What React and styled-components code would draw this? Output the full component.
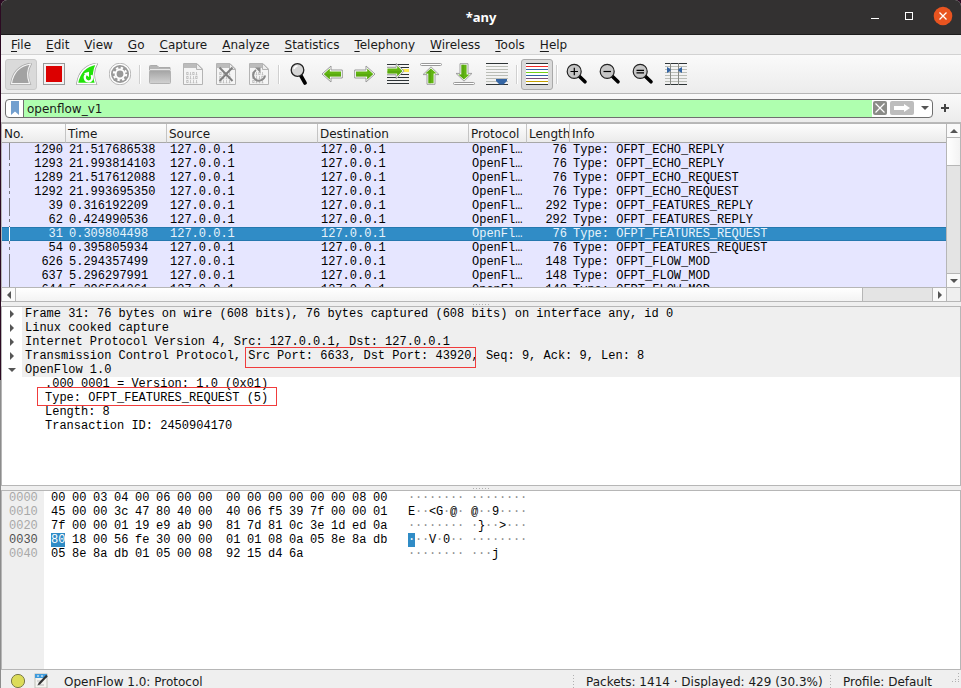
import styled, { createGlobalStyle, css } from "styled-components";

const GlobalStyle = createGlobalStyle`
  * {
    box-sizing: border-box;
  }

  body {
    margin: 0;
    overflow: hidden;
    color: #1a1a1a;
    font-family: "DejaVu Sans", sans-serif;
    font-size: 12px;
  }

  button {
    padding: 0;
    border: 0;
    background: none;
    color: inherit;
    font: inherit;
  }
`;

const mono = css`
  font-family: "Liberation Mono", monospace;
  font-size: 12px;
  line-height: 14px;
  color: #000;
`;

const Desktop = styled.div`
  height: 100vh;
  padding-left: 1px;
  background: linear-gradient(#2c0a22 0 380px, #8c8c8c 380px);
`;

const Window = styled.div`
  display: flex;
  flex-direction: column;
  height: 100%;
  overflow: hidden;
  border-radius: 6px 6px 0 0;
  background: #efefef;
`;

const TitleBar = styled.header`
  display: grid;
  grid-template-columns: 1fr auto 1fr;
  align-items: center;
  height: 35px;
  flex: none;
  border-bottom: 1px solid #1c1b1b;
  background: #333131;
`;

const Title = styled.h1`
  grid-column: 2;
  margin: 0;
  color: #fff;
  font: bold 13px/18px "Noto Sans", sans-serif;
`;

const WindowButtons = styled.div`
  display: flex;
  justify-content: flex-end;
  gap: 14px;
  padding-right: 8px;
  margin-bottom: 2px;
`;

const WindowButton = styled.button`
  width: 20px;
  height: 20px;

  svg {
    display: block;
  }
`;

const MenuBar = styled.nav`
  display: flex;
  gap: 15px;
  height: 20px;
  flex: none;
  padding-left: 10px;
  border-bottom: 1px solid #d2d2d2;
`;

const MenuItem = styled.button`
  padding-top: 2px;
  line-height: 17px;

  &::first-letter {
    text-decoration: underline;
    text-underline-offset: 2px;
  }
`;

const ToolBar = styled.div`
  display: flex;
  align-items: center;
  gap: 1px;
  height: 39px;
  flex: none;
  padding: 1px 0 0 4px;
  border-bottom: 1px solid #b6b6b6;
  background: linear-gradient(#fafafa, #ececec);
`;

const ToolButton = styled.button`
  display: flex;
  align-items: flex-start;
  justify-content: center;
  width: 32px;
  height: 31px;
  padding-top: 3px;
  border: 1px solid ${({ $border }) => $border || "transparent"};
  border-radius: 3px;
  background: ${({ $border }) => ($border ? "#dadada" : "none")};
`;

const Separator = styled.span`
  width: 6px;
  height: 19px;
  background: linear-gradient(90deg, transparent 2px, #d0d0d0 2px 3px, #fff 3px 4px, transparent 4px);
`;

const FilterBar = styled.form`
  display: flex;
  align-items: center;
  height: 29px;
  flex: none;
  padding: 0 12px 0 4px;
  border-bottom: 1px solid #b9b9b9;
  background: linear-gradient(#fafafa, #ececec);
`;

const FilterField = styled.div`
  display: flex;
  align-items: center;
  flex: 1;
  height: 19px;
  overflow: hidden;
  border: 1px solid #6f6f6f;
  border-radius: 4px;
  background: #fff;

  svg {
    display: block;
  }
`;

const BookmarkButton = styled.button`
  display: flex;
  align-items: center;
  justify-content: center;
  width: 18px;
  height: 17px;
  border-right: 1px solid #6f6f6f;
`;

const FilterInput = styled.input`
  flex: 1;
  min-width: 0;
  height: 17px;
  margin-right: 1px;
  padding: 2px 3px 0;
  border: 0;
  outline: 0;
  background: #afffaf;
  color: #1a1a1a;
  font: inherit;
`;

const ClearButton = styled.button`
  width: 14px;
  height: 14px;
  border-radius: 2px;
  background: #8b8c88;
`;

const ApplyButton = styled.button`
  width: 24px;
  height: 14px;
  margin-left: 3px;
  border-radius: 2px;
  background: #bdbdbd;
`;

const HistoryButton = styled.button`
  display: flex;
  align-items: center;
  justify-content: center;
  width: 18px;
  height: 17px;
  padding-left: 4px;
`;

const AddButton = styled.button`
  width: 8px;
  height: 8px;
  margin-left: 8px;

  svg {
    display: block;
  }
`;

const Pane = styled.section`
  flex: ${({ $grow }) => $grow || 180} 1 0;
  min-height: 0;
  overflow: hidden;
  border: 1px solid #b6b6b6;
  background: #fff;
`;

const Splitter = styled.div`
  display: flex;
  align-items: center;
  justify-content: center;
  height: 4px;
  flex: none;

  &::after {
    content: "";
    width: 17px;
    height: 1px;
    background: repeating-linear-gradient(90deg, #b0b0b0 0 1px, transparent 1px 3px);
  }
`;

const PacketPane = styled(Pane)`
  display: grid;
  grid-template-columns: minmax(0, 1fr) 14px;
  grid-template-rows: minmax(0, 1fr) 14px;
`;

const PacketView = styled.div`
  overflow: hidden;
  background: #e6e6ff;
`;

const PacketTable = styled.table`
  width: 100%;
  table-layout: fixed;
  border-collapse: separate;
  border-spacing: 0;
`;

const HeadCell = styled.th`
  height: 19px;
  overflow: hidden;
  padding: 2px 2px 0;
  border-right: 1px solid #c4c4c4;
  border-bottom: 1px solid #a8a8a8;
  background: linear-gradient(#fdfdfd, #ebebeb);
  font-weight: normal;
  line-height: 16px;
  text-align: left;
  white-space: nowrap;

  &:last-child {
    border-right: 0;
  }
`;

const Cell = styled.td`
  ${mono}
  height: 14px;
  overflow: hidden;
  padding: 0 3px;
  text-align: ${({ $right }) => ($right ? "right" : "left")};
  text-overflow: ellipsis;
  white-space: nowrap;
`;

const solidLine = "linear-gradient(currentColor, currentColor)";
const dashedLine =
  "linear-gradient(currentColor 3px, transparent 3px 6px, currentColor 6px 9px, transparent 9px 13px, currentColor 13px)";

const PacketRow = styled.tr`
  color: ${({ $selected }) => ($selected ? "#fff" : "#77777f")};
  background: ${({ $selected }) =>
    $selected ? "linear-gradient(#2478af 1px, #308cc6 1px 13px, #2478af 13px)" : "#e6e6ff"};

  ${Cell} {
    color: ${({ $selected }) => ($selected ? "#e8f3fb" : "#000")};
  }

  ${Cell}:first-child {
    background: ${({ $related }) => ($related ? dashedLine : solidLine)} 7px 0 / 1px 14px no-repeat;
    color: inherit;
  }
`;

const PacketNumber = styled.span`
  color: ${({ $selected }) => ($selected ? "#e8f3fb" : "#000")};
`;

const VScroll = styled.div`
  display: flex;
  flex-direction: column;
  border-left: 1px solid #b6b6b6;
  background: #e4e4e4;
`;

const HScroll = styled.div`
  display: flex;
  border-top: 1px solid #b6b6b6;
  background: #e4e4e4;
`;

const ScrollButton = styled.button`
  display: flex;
  align-items: center;
  justify-content: center;
  width: 13px;
  height: 13px;
  flex: none;
  background: #fafafa;
`;

const VThumb = styled.div`
  height: 29px;
  margin-bottom: auto;
  border: solid #b6b6b6;
  border-width: 1px 0;
  background: linear-gradient(90deg, #fff, #f3f3f3);

  & + ${ScrollButton} {
    height: 14px;
    border-top: 1px solid #b6b6b6;
  }
`;

const HThumb = styled.div`
  flex: 0 1 848px;
  border: solid #b6b6b6;
  border-width: 0 1px;
  background: linear-gradient(#fff, #f3f3f3);

  & + ${ScrollButton} {
    width: 14px;
    margin-left: auto;
    border-left: 1px solid #b6b6b6;
  }
`;

const ScrollCorner = styled.div`
  border: solid #b6b6b6;
  border-width: 1px 0 0 1px;
  background: #efefef;
`;

const DetailPane = styled(Pane)`
  position: relative;
`;

const Tree = styled.ul`
  ${mono}
  margin: 0;
  padding: 0;
  list-style: none;
  white-space: pre;
`;

const TreeLine = styled.div`
  display: flex;
`;

const Expander = styled.button`
  display: flex;
  align-items: center;
  justify-content: center;
  width: 20px;
  height: 14px;
  flex: none;
`;

const TreeText = styled.span`
  flex: 1;
  padding-left: 3px;
  background: #efefef;
`;

const TreeLeaf = styled.li`
  padding-left: 43px;
`;

const Mark = styled.div`
  position: absolute;
  left: ${({ $left }) => $left}px;
  top: ${({ $top }) => $top}px;
  width: ${({ $width }) => $width}px;
  height: ${({ $height }) => $height}px;
  border: 1px solid #f03c3c;
  pointer-events: none;
`;

const HexPane = styled(Pane)`
  ${mono}
  background: linear-gradient(90deg, #efefef 42px, #fff 42px);
`;

const HexRow = styled.div`
  display: flex;
  height: 14px;
`;

const Offset = styled.span`
  width: 49px;
  padding-left: 7px;
  color: ${({ $active }) => ($active ? "#505050" : "#a8a8a8")};
`;

const HexGroup = styled.span`
  display: flex;
  width: 168px;
  margin-right: ${({ $last }) => ($last ? "14px" : "7px")};
`;

const HexByte = styled.span`
  width: 14px;
  margin-right: 7px;
  background: ${({ $active }) => ($active ? "#308cc6" : "none")};
  color: ${({ $active }) => ($active ? "#fff" : "#000")};
`;

const AsciiGroup = styled.span`
  display: flex;
  width: 56px;
  margin-right: 7px;
`;

const AsciiChar = styled.span`
  width: 7px;
  background: ${({ $active }) => ($active ? "#308cc6" : "none")};
  color: ${({ $active, $dim }) => ($active ? "#fff" : $dim ? "#909090" : "#000")};
`;

const StatusBar = styled.footer`
  display: flex;
  align-items: flex-start;
  height: 18px;
  flex: none;
  overflow: hidden;
  padding: 3px 0 0 9px;
  line-height: 18px;
  white-space: nowrap;
`;

const StatusIcon = styled.button`
  width: 16px;
  height: 16px;
  margin-right: 7px;

  svg {
    display: block;
  }
`;

const StatusText = styled.span`
  flex: 1;
  padding-left: 8px;
`;

const StatusSection = styled.span`
  width: ${({ $width }) => $width}px;
  padding-left: 13px;
  background: repeating-linear-gradient(#b0b0b0 0 1px, transparent 1px 3px) 0 2px / 1px 14px no-repeat;
`;

const Svg = ({ size = 22, children }) => (
  <svg width={size} height={size} viewBox={`0 0 ${size} ${size}`} aria-hidden="true">
    {children}
  </svg>
);

const finPath = "M1.5 20.5C3 11 9 3 20.5 1C17.5 6 16.5 13 19.5 20.5Z";

const FinIcon = () => (
  <Svg>
    <path d={finPath} fill="#a2a2a2" stroke="#aaa" strokeWidth="2.6" />
    <path d={finPath} fill="#a2a2a2" stroke="#f4f4f4" strokeWidth="1.2" />
  </Svg>
);

const StopIcon = () => (
  <Svg>
    <rect x=".5" y=".5" width="21" height="21" fill="#f2f2f2" stroke="#999" />
    <rect x="3" y="3" width="16" height="16" fill="#dc0000" />
  </Svg>
);

const RestartIcon = () => (
  <Svg>
    <path d={finPath} fill="#21e308" stroke="#999" strokeWidth="2.6" />
    <path d={finPath} fill="#21e308" stroke="#fff" strokeWidth="1.3" />
    <path d="M10 11.5C7.5 14 9 18.5 12.5 18.5C16 18.5 17 15 15.5 12" fill="none" stroke="#fff" strokeWidth="2.2" />
    <path d="M8 10.2L13 8.8V14Z" fill="#fff" />
  </Svg>
);

const GearIcon = () => (
  <Svg>
    <circle cx="11" cy="11" r="10.8" fill="#fff" stroke="#999" strokeWidth=".7" />
    <circle cx="11" cy="11" r="9" fill="#999" />
    <circle cx="11" cy="11" r="4.4" fill="none" stroke="#fff" strokeWidth="2" />
    <circle cx="11" cy="11" r="6.2" fill="none" stroke="#fff" strokeWidth="2" strokeDasharray="2.4 2.47" />
  </Svg>
);

const FolderIcon = () => (
  <Svg>
    <defs>
      <linearGradient id="folder" x2="0" y2="1">
        <stop stopColor="#a4a4a4" />
        <stop offset="1" stopColor="#d2d2d2" />
      </linearGradient>
    </defs>
    <path d="M.5 5V3.5Q.5 2.5 1.5 2.5H8L10 4.5H21V7H.5Z" fill="#b5b5b5" stroke="#aaa" />
    <rect x=".5" y="7.5" width="21" height="13" rx="1" fill="url(#folder)" stroke="#b2b2b2" />
    <rect x="1" y="6" width="20" height="1" fill="#e8e8e8" />
  </Svg>
);

const fileDigits = [
  { y: 9, digits: [0, 1, 0, 1] },
  { y: 13, digits: [0, 1, 1, 0] },
  { y: 17, digits: [0, 1, 1, 1] },
];

const FileIcon = ({ children }) => (
  <Svg>
    <path d="M1.5 .5H15L20.5 6V21.5H1.5Z" fill="#f5f5f5" stroke="#b4b4b4" />
    <path d="M2 1H14.5L16 5H2Z" fill="#bcbcbc" />
    <path d="M14.5 .5V6.5H20.5Z" fill="#eee" stroke="#b4b4b4" />
    {fileDigits.map(({ y, digits }) =>
      digits.map((digit, i) =>
        digit ? (
          <path key={`${y}${i}`} d={`M${5.5 + i * 3} ${y}v3M${4.6 + i * 3} ${y + 2.8}h1.8`} stroke="#bbb" strokeWidth=".8" />
        ) : (
          <rect key={`${y}${i}`} x={4.7 + i * 3} y={y + 0.3} width="1.4" height="2.4" fill="none" stroke="#bbb" strokeWidth=".7" />
        )
      )
    )}
    {children}
  </Svg>
);

const CloseFileIcon = () => (
  <FileIcon>
    <path d="M4.5 4.5L17.5 18M17.5 4.5L4.5 18" stroke="#808080" strokeWidth="2" />
  </FileIcon>
);

const ReloadIcon = () => (
  <FileIcon>
    <path d="M8 7C4.5 9.5 4 14 7.5 16.7C11 19 16.5 17 17 12.5" fill="none" stroke="#8a8a8a" strokeWidth="2" />
    <path d="M7 4.5H12.5V10Z" fill="#8a8a8a" />
  </FileIcon>
);

const FindIcon = () => (
  <Svg>
    <path d="M12.5 12L17 20" stroke="#000" strokeWidth="3.6" strokeLinecap="round" />
    <circle cx="9.5" cy="7" r="6.3" fill="#d6d6d6" stroke="#222" strokeWidth="1.3" />
    <path d="M6 6A4 4 0 0 1 9.5 3" fill="none" stroke="#fff" strokeWidth="1.5" />
  </Svg>
);

const ZoomIcon = ({ d }) => (
  <Svg>
    <path d="M12.5 12.5L19 18.8" stroke="#000" strokeWidth="3.6" strokeLinecap="round" />
    <circle cx="8.2" cy="8.4" r="7" fill="#c6c6c6" stroke="#222" strokeWidth="1.2" />
    <path d={d} stroke="#000" strokeWidth="1.2" />
  </Svg>
);

const greenArrow = "M1 11L10 3V7H21.3V15H10V19Z";

const Arrow = ({ transform }) => (
  <g transform={transform}>
    <path d={greenArrow} fill="#fff" stroke="#999" strokeWidth="1" strokeLinejoin="round" />
    <path d="M2.8 11L8.8 5.4V8.4H20V13.6H8.8V16.6Z" fill="#62b512" />
    <path d="M2.8 11H20V13.6H8.8V16.6Z" fill="#4f9e0b" opacity=".5" />
  </g>
);

const BackIcon = () => (
  <Svg>
    <Arrow />
  </Svg>
);

const ForwardIcon = () => (
  <Svg>
    <Arrow transform="matrix(-1 0 0 1 22 0)" />
  </Svg>
);

const GoToIcon = () => (
  <Svg>
    <path d="M0 1.5H22M0 4.5H22M0 14.5H22M0 17.5H22M0 20.5H22M0 11.5H22" stroke="#2e3436" />
    <rect x="14" y="6" width="8" height="3" fill="#fce94f" />
    <Arrow transform="matrix(-.88 0 0 .95 18 -2.4)" />
  </Svg>
);

const FirstIcon = () => (
  <Svg>
    <rect x=".5" y=".5" width="21" height="2" rx="1" fill="#fff" stroke="#999" />
    <Arrow transform="matrix(0 .86 -1 0 22 3)" />
  </Svg>
);

const LastIcon = () => (
  <Svg>
    <Arrow transform="matrix(0 -.86 -1 0 22 19)" />
    <rect x=".5" y="19.5" width="21" height="2" rx="1" fill="#fff" stroke="#999" />
  </Svg>
);

const AutoScrollIcon = () => (
  <Svg>
    <path d="M0 .5H22M0 21.5H22" stroke="#2e3436" />
    <path d="M0 3.5H22M0 6.5H22M0 9.5H22M0 12.5H22M0 15.5H22M0 18.5H22" stroke="#babdb6" />
    <path d="M10 16H21V18L17.5 21.5H13.5L10 18Z" fill="#3465a4" />
  </Svg>
);

const lineColors = ["#2e3436", "#ef2929", "#3465a4", "#73d216", "#3465a4", "#75507b", "#c4a000", "#2e3436"];

const ColorizeIcon = () => (
  <Svg>
    <rect width="22" height="22" fill="#fff" />
    {lineColors.map((color, i) => (
      <rect key={i} y={i * 3} width="22" height="1" fill={color} />
    ))}
  </Svg>
);

const ResizeIcon = () => (
  <Svg>
    <path d="M0 .5H22M0 21.5H22" stroke="#2e3436" />
    <path d="M0 3.5H22M0 6.5H22M0 9.5H22M0 12.5H22M0 15.5H22M0 18.5H22" stroke="#babdb6" />
    <path d="M5.5 0V22M13.5 0V22" stroke="#888a85" />
    <path d="M2 4L5.5 6V8L2 10ZM17 4L13.5 6V8L17 10Z" fill="#3465a4" />
  </Svg>
);

const Triangle = ({ rotate = 0 }) => (
  <svg width="8" height="8" viewBox="0 0 8 8" aria-hidden="true">
    <path d="M0 2H8L4 6Z" fill="#555" transform={`rotate(${rotate} 4 4)`} />
  </svg>
);

const menus = [
  "File", "Edit", "View", "Go", "Capture", "Analyze", "Statistics",
  "Telephony", "Wireless", "Tools", "Help",
];

const toolGroups = [
  [
    { label: "Start capturing packets", icon: <FinIcon />, border: "#cacaca" },
    { label: "Stop capturing packets", icon: <StopIcon /> },
    { label: "Restart current capture", icon: <RestartIcon /> },
    { label: "Capture options", icon: <GearIcon /> },
  ],
  [
    { label: "Open", icon: <FolderIcon /> },
    { label: "Save", icon: <FileIcon /> },
    { label: "Close", icon: <CloseFileIcon /> },
    { label: "Reload", icon: <ReloadIcon /> },
  ],
  [
    { label: "Find a packet", icon: <FindIcon /> },
    { label: "Previous packet", icon: <BackIcon /> },
    { label: "Next packet", icon: <ForwardIcon /> },
    { label: "Go to packet", icon: <GoToIcon /> },
    { label: "First packet", icon: <FirstIcon /> },
    { label: "Last packet", icon: <LastIcon /> },
    { label: "Auto scroll", icon: <AutoScrollIcon /> },
  ],
  [{ label: "Colorize", icon: <ColorizeIcon />, border: "#a9a9a9" }],
  [
    { label: "Zoom in", icon: <ZoomIcon d="M4.5 8.5H12M8.3 4.8V12.2" /> },
    { label: "Zoom out", icon: <ZoomIcon d="M4.5 8.5H12" /> },
    { label: "Normal size", icon: <ZoomIcon d="M4.5 7.4H12M4.5 9.8H12" /> },
    { label: "Resize columns", icon: <ResizeIcon /> },
  ],
];

// "auto" takes what the fixed columns leave over
const columns = [
  { title: "No.", width: "64px" },
  { title: "Time", width: "101px" },
  { title: "Source", width: "151px" },
  { title: "Destination", width: "151px" },
  { title: "Protocol", width: "58px" },
  { title: "Length", width: "43px" },
  { title: "Info", width: "auto" },
];

const packets = [
  { no: 1290, time: "21.517686538", length: 76, type: "OFPT_ECHO_REPLY" },
  { no: 1293, time: "21.993814103", length: 76, type: "OFPT_ECHO_REPLY", related: true },
  { no: 1289, time: "21.517612088", length: 76, type: "OFPT_ECHO_REQUEST" },
  { no: 1292, time: "21.993695350", length: 76, type: "OFPT_ECHO_REQUEST", related: true },
  { no: 39, time: "0.316192209", length: 292, type: "OFPT_FEATURES_REPLY" },
  { no: 62, time: "0.424990536", length: 292, type: "OFPT_FEATURES_REPLY", related: true },
  { no: 31, time: "0.309804498", length: 76, type: "OFPT_FEATURES_REQUEST" },
  { no: 54, time: "0.395805934", length: 76, type: "OFPT_FEATURES_REQUEST", related: true },
  { no: 626, time: "5.294357499", length: 148, type: "OFPT_FLOW_MOD" },
  { no: 637, time: "5.296297991", length: 148, type: "OFPT_FLOW_MOD" },
  { no: 644, time: "5.296501361", length: 148, type: "OFPT_FLOW_MOD" },
];

const selectedNo = 31;

const layers = [
  { text: "Frame 31: 76 bytes on wire (608 bits), 76 bytes captured (608 bits) on interface any, id 0" },
  { text: "Linux cooked capture" },
  { text: "Internet Protocol Version 4, Src: 127.0.0.1, Dst: 127.0.0.1" },
  { text: "Transmission Control Protocol, Src Port: 6633, Dst Port: 43920, Seq: 9, Ack: 9, Len: 8" },
  {
    text: "OpenFlow 1.0",
    fields: [
      ".000 0001 = Version: 1.0 (0x01)",
      "Type: OFPT_FEATURES_REQUEST (5)",
      "Length: 8",
      "Transaction ID: 2450904170",
    ],
  },
];

const hexLines = [
  { offset: "0000", bytes: "00 00 03 04 00 06 00 00 00 00 00 00 00 00 08 00" },
  { offset: "0010", bytes: "45 00 00 3c 47 80 40 00 40 06 f5 39 7f 00 00 01" },
  { offset: "0020", bytes: "7f 00 00 01 19 e9 ab 90 81 7d 81 0c 3e 1d ed 0a" },
  { offset: "0030", bytes: "80 18 00 56 fe 30 00 00 01 01 08 0a 05 8e 8a db", active: true },
  { offset: "0040", bytes: "05 8e 8a db 01 05 00 08 92 15 d4 6a" },
];

const toAscii = (byte) => {
  const code = parseInt(byte, 16);
  return code > 31 && code < 127 ? String.fromCharCode(code) : "·";
};

const HexLine = ({ offset, bytes, active }) => {
  const list = bytes.split(" ");
  const groups = [list.slice(0, 8), list.slice(8)];

  return (
    <HexRow>
      <Offset $active={active}>{offset}</Offset>
      {groups.map((group, g) => (
        <HexGroup key={g} $last={g === 1}>
          {group.map((byte, i) => (
            <HexByte key={i} $active={active && g === 0 && i === 0}>
              {byte}
            </HexByte>
          ))}
        </HexGroup>
      ))}
      {groups.map((group, g) => (
        <AsciiGroup key={g}>
          {group.map((byte, i) => (
            <AsciiChar key={i} $active={active && g === 0 && i === 0} $dim={toAscii(byte) === "·"}>
              {toAscii(byte)}
            </AsciiChar>
          ))}
        </AsciiGroup>
      ))}
    </HexRow>
  );
};

const App = () => {
  return (
    <Desktop>
      <GlobalStyle />
      <Window>
        <TitleBar>
          <Title>*any</Title>
          <WindowButtons>
            <WindowButton aria-label="Minimize">
              <Svg size={20}>
                <rect x="6" y="12" width="8" height="1" fill="#fff" />
              </Svg>
            </WindowButton>
            <WindowButton aria-label="Maximize">
              <Svg size={20}>
                <rect x="6.5" y="6.5" width="7" height="7" fill="none" stroke="#fff" />
              </Svg>
            </WindowButton>
            <WindowButton aria-label="Close">
              <Svg size={20}>
                <circle cx="10" cy="10" r="9.3" fill="#e95420" />
                <path d="M6.5 6.5L13.5 13.5M13.5 6.5L6.5 13.5" stroke="#fff" strokeWidth="1.3" />
              </Svg>
            </WindowButton>
          </WindowButtons>
        </TitleBar>

        <MenuBar>
          {menus.map((menu) => (
            <MenuItem key={menu}>{menu}</MenuItem>
          ))}
        </MenuBar>

        <ToolBar>
          {toolGroups.map((group, g) => [
            g > 0 && <Separator key={`separator-${g}`} />,
            ...group.map(({ label, icon, border }) => (
              <ToolButton key={label} aria-label={label} $border={border}>
                {icon}
              </ToolButton>
            )),
          ])}
        </ToolBar>

        <FilterBar onSubmit={(e) => e.preventDefault()}>
          <FilterField>
            <BookmarkButton type="button" aria-label="Bookmarks">
              <svg width="8" height="14" viewBox="0 0 8 14">
                <path d="M0 0H8V14L4 10.5L0 14Z" fill="#729fcf" />
              </svg>
            </BookmarkButton>
            <FilterInput aria-label="Display filter" defaultValue="openflow_v1" />
            <ClearButton type="button" aria-label="Clear">
              <Svg size={14}>
                <path d="M2.5 2.5L11.5 11.5M11.5 2.5L2.5 11.5" stroke="#fff" strokeWidth="1.2" />
              </Svg>
            </ClearButton>
            <ApplyButton aria-label="Apply">
              <svg width="24" height="14" viewBox="0 0 24 14">
                <path d="M4 5H14V3L20 7L14 11V9H4Z" fill="#fff" />
              </svg>
            </ApplyButton>
            <HistoryButton type="button" aria-label="Filter history">
              <Triangle />
            </HistoryButton>
          </FilterField>
          <AddButton type="button" aria-label="Add a filter button">
            <Svg size={8}>
              <path d="M0 4H8M4 0V8" stroke="#444" strokeWidth="2" />
            </Svg>
          </AddButton>
        </FilterBar>

        <PacketPane $grow={179}>
          <PacketView>
            <PacketTable>
              <colgroup>
                {columns.map(({ title, width }) => (
                  <col key={title} style={{ width }} />
                ))}
              </colgroup>
              <thead>
                <tr>
                  {columns.map(({ title }) => (
                    <HeadCell key={title}>{title}</HeadCell>
                  ))}
                </tr>
              </thead>
              <tbody>
                {packets.map(({ no, time, length, type, related }) => (
                  <PacketRow key={no} $selected={no === selectedNo} $related={related}>
                    <Cell $right>
                      <PacketNumber $selected={no === selectedNo}>{no}</PacketNumber>
                    </Cell>
                    <Cell>{time}</Cell>
                    <Cell>127.0.0.1</Cell>
                    <Cell>127.0.0.1</Cell>
                    <Cell>OpenFl…</Cell>
                    <Cell $right>{length}</Cell>
                    <Cell>Type: {type}</Cell>
                  </PacketRow>
                ))}
              </tbody>
            </PacketTable>
          </PacketView>
          <VScroll>
            <ScrollButton aria-label="Scroll up">
              <Triangle rotate={180} />
            </ScrollButton>
            <VThumb />
            <ScrollButton aria-label="Scroll down">
              <Triangle />
            </ScrollButton>
          </VScroll>
          <HScroll>
            <ScrollButton aria-label="Scroll left">
              <Triangle rotate={90} />
            </ScrollButton>
            <HThumb />
            <ScrollButton aria-label="Scroll right">
              <Triangle rotate={270} />
            </ScrollButton>
          </HScroll>
          <ScrollCorner />
        </PacketPane>

        <Splitter />

        <DetailPane>
          <Tree>
            {layers.map(({ text, fields }) => (
              <li key={text}>
                <TreeLine>
                  <Expander aria-label={text} aria-expanded={Boolean(fields)}>
                    <Triangle rotate={fields ? 0 : 270} />
                  </Expander>
                  <TreeText>{text}</TreeText>
                </TreeLine>
                {fields && (
                  <Tree>
                    {fields.map((field) => (
                      <TreeLeaf key={field}>{field}</TreeLeaf>
                    ))}
                  </Tree>
                )}
              </li>
            ))}
          </Tree>
          <Mark $left={243} $top={40} $width={231} $height={21} />
          <Mark $left={35} $top={80} $width={240} $height={19} />
        </DetailPane>

        <Splitter />

        <HexPane>
          {hexLines.map((line) => (
            <HexLine key={line.offset} {...line} />
          ))}
        </HexPane>

        <StatusBar>
          <StatusIcon aria-label="Expert information">
            <Svg size={16}>
              <circle cx="8" cy="8" r="6.6" fill="#dcdc5a" stroke="#7a7a4a" />
            </Svg>
          </StatusIcon>
          <StatusIcon aria-label="Capture file comment">
            <Svg size={16}>
              <rect x="2" y="1" width="12" height="14" fill="#f4f4f0" stroke="#c0c0b8" />
              <rect x="2" y="1" width="12" height="4" fill="#3f9bdc" />
              <path d="M4 3H6M8 3H10M4 8H8M4 11H7" stroke="#fff" />
              <path d="M4 8H9M4 12H11" stroke="#b5b5b5" />
              <path d="M6 11L14 2.5" stroke="#333" strokeWidth="2.2" />
              <path d="M4.8 12.2L6.8 11.5L5.5 10.2Z" fill="#333" />
            </Svg>
          </StatusIcon>
          <StatusText>OpenFlow 1.0: Protocol</StatusText>
          <StatusSection $width={257}>Packets: 1414 · Displayed: 429 (30.3%)</StatusSection>
          <StatusSection $width={122}>Profile: Default</StatusSection>
          <Svg size={9}>
            <path d="M6 3.5H7M3 6.5H4M6 6.5H7M6 .5H7M0 8.5H1M3 8.5H4M6 8.5H7" stroke="#b0b0b0" />
          </Svg>
        </StatusBar>
      </Window>
    </Desktop>
  );
};

export default App;
